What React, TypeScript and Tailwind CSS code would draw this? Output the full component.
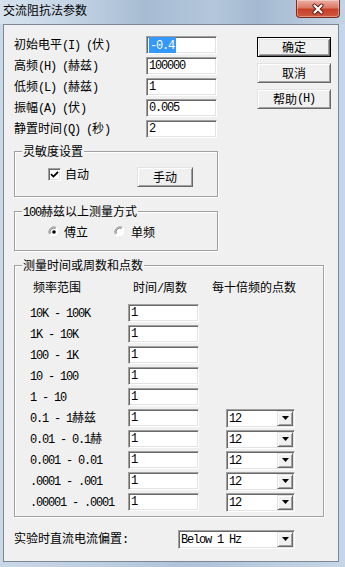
import React from "react";

const sunken =
  "border border-t-[#a0a0a0] border-l-[#a0a0a0] border-r-white border-b-white shadow-[inset_1px_1px_0_#696969,inset_-1px_-1px_0_#e3e3e3]";
const raised =
  "border border-t-[#e3e3e3] border-l-[#e3e3e3] border-r-[#696969] border-b-[#696969] shadow-[inset_1px_1px_0_#ffffff,inset_-1px_-1px_0_#a0a0a0]";

function T({ s }: { s: string }) {
  const parts = s.match(/[\x20-\x7e]+|[^\x20-\x7e]+/g) || [];
  return (
    <>
      {parts.map((p, i) =>
        /^[\x20-\x7e]/.test(p) ? (
          <span
            key={i}
            className="font-['Liberation_Mono',monospace] text-[12px] tracking-[-1.2px] whitespace-pre"
          >
            {p}
          </span>
        ) : (
          <span key={i} className="whitespace-pre">
            {p}
          </span>
        )
      )}
    </>
  );
}

function Input({ value, selected, w }: { value: string; selected?: boolean; w: string }) {
  return (
    <div className={`${w} h-[18px] bg-white ${sunken} flex items-center pl-[2px] leading-[14px]`}>
      {selected ? (
        <span className="bg-[#3399ff] text-white pl-[1px] pr-[2px] leading-[13px]">
          <T s={value} />
        </span>
      ) : (
        <T s={value} />
      )}
    </div>
  );
}

function Arrow() {
  return (
    <svg width="7" height="4" viewBox="0 0 7 4">
      <path d="M0 0 H7 L3.5 4 Z" fill="#000" />
    </svg>
  );
}

function Select({ value, w }: { value: string; w: string }) {
  return (
    <div className={`${w} h-[19px] bg-white ${sunken} flex items-center shrink-0`}>
      <span className="flex-1 pl-[2px] leading-[14px]">
        <T s={value} />
      </span>
      <div className={`w-[16px] h-[15px] mr-[1px] bg-[#f0f0f0] ${raised} flex items-center justify-center`}>
        <Arrow />
      </div>
    </div>
  );
}

function Field({ label, value, selected }: { label: string; value: string; selected?: boolean }) {
  return (
    <div className="flex items-center h-[18px]">
      <div className="w-[132px] leading-[14px]">
        <T s={label} />
      </div>
      <Input value={value} selected={selected} w="w-[71px]" />
    </div>
  );
}

function Group({
  title,
  className,
  children,
}: {
  title: string;
  className: string;
  children?: React.ReactNode;
}) {
  return (
    <div className={`relative border border-[#a0a0a0] shadow-[inset_1px_1px_0_#ffffff,1px_1px_0_#ffffff] ${className}`}>
      <div className="absolute left-[7px] top-[-8px] bg-[#f0f0f0] px-[1px] leading-[14px]">
        <T s={title} />
      </div>
      {children}
    </div>
  );
}

function Radio({ checked }: { checked?: boolean }) {
  return (
    <svg width="12" height="12" viewBox="0 0 12 12" className="shrink-0">
      <circle cx="6" cy="6" r="5.5" fill="#fff" />
      <path d="M1.2 8.2 A5.3 5.3 0 0 1 8.2 1.2" stroke="#a0a0a0" strokeWidth="1" fill="none" />
      <path d="M2.2 7.6 A4.2 4.2 0 0 1 7.6 2.2" stroke="#696969" strokeWidth="1" fill="none" />
      <path d="M10.8 3.8 A5.3 5.3 0 0 1 3.8 10.8" stroke="#e3e3e3" strokeWidth="1" fill="none" />
      {checked && <circle cx="6" cy="6" r="1.8" fill="#000" />}
    </svg>
  );
}

const rows: [string, string?][] = [
  ["10K - 100K"],
  ["1K - 10K"],
  ["100 - 1K"],
  ["10 - 100"],
  ["1 - 10"],
  ["0.1 - 1赫兹", "12"],
  ["0.01 - 0.1赫", "12"],
  ["0.001 - 0.01", "12"],
  [".0001 - .001", "12"],
  [".00001 - .0001", "12"],
];

export default function App() {
  return (
    <div className="w-[345px] h-[567px] flex flex-col bg-[linear-gradient(90deg,#c9d8e8_0%,#bccde0_30%,#aec2d8_55%,#bccde0_80%,#c6d6e7_100%)] font-['Noto_Sans_CJK_SC',sans-serif] text-[12px] text-black overflow-hidden">
      <div className="h-[24px] flex items-start justify-between bg-[linear-gradient(90deg,#d6e2ee_0%,#c7d6e6_18%,#a7bcd3_42%,#b3c6db_62%,#a4b9d1_75%,#c3d3e4_100%)]">
        <span className="ml-[3px] mt-[3px] leading-[14px]">交流阻抗法参数</span>
        <div className="mr-[5px] w-[44px] h-[18px] rounded-b-[4px] border border-t-0 border-[#7a2a1f] bg-[linear-gradient(180deg,#eab0a4_0%,#dc7a66_45%,#c63f28_55%,#cf5a41_100%)] shadow-[inset_0_0_0_1px_rgba(255,255,255,0.35)] flex items-center justify-center">
          <svg width="14" height="12" viewBox="0 0 14 12">
            <path d="M3.5 2.5 L10.5 9.5 M10.5 2.5 L3.5 9.5" stroke="#5a1a10" strokeWidth="4" strokeLinecap="round" />
            <path d="M3.5 2.5 L10.5 9.5 M10.5 2.5 L3.5 9.5" stroke="#fff" strokeWidth="2.2" strokeLinecap="round" />
          </svg>
        </div>
      </div>
      <div className="ml-[3px] mr-[6px] mb-[5px] flex-1 bg-[#f0f0f0] border border-[#7b8795] pl-[10px] pt-[11px] flex flex-col">
        <div className="flex">
          <div className="flex flex-col gap-[3px] w-[203px]">
            <Field label="初始电平(I) (伏)" value="-0.4" selected />
            <Field label="高频(H) (赫兹)" value="100000" />
            <Field label="低频(L) (赫兹)" value="1" />
            <Field label="振幅(A) (伏)" value="0.005" />
            <Field label="静置时间(Q) (秒)" value="2" />
          </div>
          <div className="ml-[40px] mt-[1px] flex flex-col gap-[6px]">
            <div className="w-[74px] h-[20px] bg-[#f0f0f0] border border-black shadow-[inset_1px_1px_0_#ffffff,inset_-1px_-1px_0_#696969,inset_2px_2px_0_#e3e3e3,inset_-2px_-2px_0_#a0a0a0] flex items-center justify-center leading-[14px]">
              确定
            </div>
            <div className={`w-[74px] h-[20px] bg-[#f0f0f0] ${raised} flex items-center justify-center leading-[14px]`}>
              取消
            </div>
            <div className={`w-[74px] h-[20px] bg-[#f0f0f0] ${raised} flex items-center justify-center leading-[14px]`}>
              <T s="帮助(H)" />
            </div>
          </div>
        </div>

        <Group title="灵敏度设置" className="mt-[13px] w-[204px] h-[46px]">
          <div className="flex items-start pt-[15px] pl-[33px]">
            <div className="flex items-center h-[14px]">
              <div className={`w-[13px] h-[13px] bg-white ${sunken} flex items-center justify-center`}>
                <svg width="9" height="9" viewBox="0 0 9 9">
                  <path d="M1 4.2 L3.4 6.6 L8 2" stroke="#000" strokeWidth="1.8" fill="none" />
                </svg>
              </div>
              <span className="ml-[4px] leading-[14px]">自动</span>
            </div>
            <div className={`ml-[48px] w-[56px] h-[20px] bg-[#f0f0f0] ${raised} flex items-center justify-center leading-[14px]`}>
              手动
            </div>
          </div>
        </Group>

        <Group title="100赫兹以上测量方式" className="mt-[14px] w-[204px] h-[40px]">
          <div className="flex items-center pt-[13px] pl-[33px] h-[27px]">
            <Radio checked />
            <span className="ml-[4px] leading-[14px]">傅立</span>
            <div className="ml-[26px]">
              <Radio />
            </div>
            <span className="ml-[5px] leading-[14px]">单频</span>
          </div>
        </Group>

        <Group title="测量时间或周数和点数" className="mt-[14px] w-[310px] h-[252px]">
          <div className="flex pt-[14px] leading-[14px]">
            <span className="ml-[18px] w-[100px]">频率范围</span>
            <span className="w-[79px]">
              <T s="时间/周数" />
            </span>
            <span>每十倍频的点数</span>
          </div>
          <div className="mt-[8px] flex flex-col gap-[3px] pl-[15px]">
            {rows.map(([label, sel], i) => (
              <div key={i} className="flex items-center h-[18px]">
                <div className="w-[98px] leading-[14px]">
                  <T s={label} />
                </div>
                <Input value="1" w="w-[71px]" />
                {sel && (
                  <div className="ml-[27px]">
                    <Select value={sel} w="w-[69px]" />
                  </div>
                )}
              </div>
            ))}
          </div>
        </Group>

        <div className="mt-[13px] flex items-center h-[18px]">
          <div className="w-[164px] leading-[14px]">
            <T s="实验时直流电流偏置:" />
          </div>
          <Select value="Below 1 Hz" w="w-[117px]" />
        </div>
      </div>
    </div>
  );
}
